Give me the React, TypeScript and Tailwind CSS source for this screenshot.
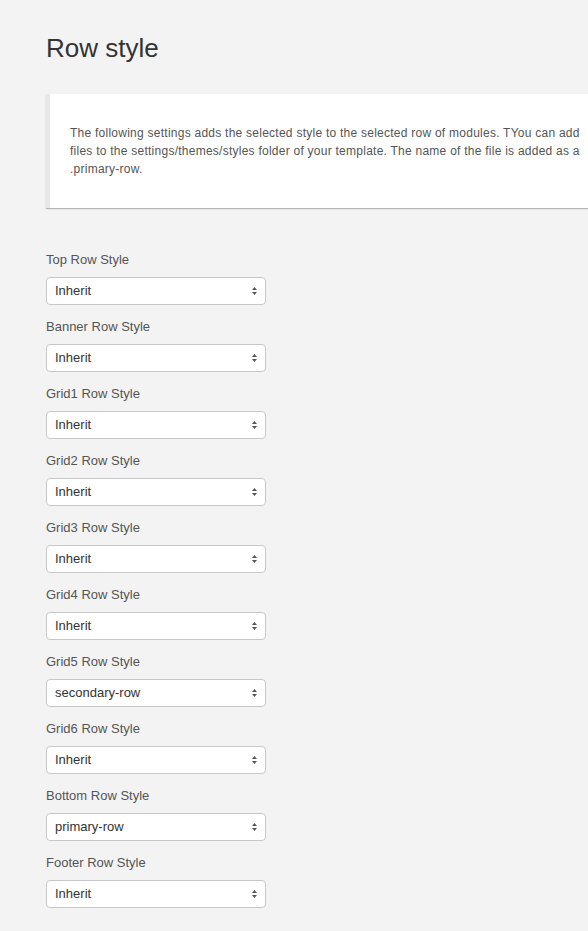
const ROWS = [
  { label: "Top Row Style", value: "Inherit" },
  { label: "Banner Row Style", value: "Inherit" },
  { label: "Grid1 Row Style", value: "Inherit" },
  { label: "Grid2 Row Style", value: "Inherit" },
  { label: "Grid3 Row Style", value: "Inherit" },
  { label: "Grid4 Row Style", value: "Inherit" },
  { label: "Grid5 Row Style", value: "secondary-row" },
  { label: "Grid6 Row Style", value: "Inherit" },
  { label: "Bottom Row Style", value: "primary-row" },
  { label: "Footer Row Style", value: "Inherit" },
];

function SelectArrows() {
  return (
    <svg width="7" height="10" viewBox="0 0 7 10" className="shrink-0">
      <path d="M3.5 1 L6 4 L1 4 Z" fill="#555" />
      <path d="M1 6 L6 6 L3.5 9 Z" fill="#555" />
    </svg>
  );
}

function FakeSelect({ value }: { value: string }) {
  return (
    <div className="w-[220px] h-[28px] bg-white border border-[#c8c8c8] rounded-[4px] flex items-center justify-between pl-[8px] pr-[7px] text-[13px] text-[#333]">
      <span>{value}</span>
      <SelectArrows />
    </div>
  );
}

export default function App() {
  return (
    <div
      className="min-h-[931px] w-[588px] overflow-hidden bg-[#f3f3f3]"
      style={{ fontFamily: '"Liberation Sans", Arial, sans-serif' }}
    >
      <div className="pl-[46px] pt-[31px] pb-[24px]">
        <h1 className="text-[26px] leading-[34px] text-[#333] font-normal">Row style</h1>

        {/* Info block */}
        <div className="mt-[29px] w-[700px] bg-white border-l-4 border-[#e6e6e6] shadow-[0_1px_1px_rgba(0,0,0,0.25)] pl-[20px] pt-[30px] pb-[30px]">
          <p className="text-[12px] leading-[18px] text-[#555] tracking-[0.25px] whitespace-nowrap">
            The following settings adds the selected style to the selected row of modules. TYou can add
            <br />
            files to the settings/themes/styles folder of your template. The name of the file is added as a
            <br />
            .primary-row.
          </p>
        </div>

        {/* Row style selects */}
        <div className="mt-[43px] flex flex-col">
          {ROWS.map((r) => (
            <div key={r.label} className="flex flex-col pb-[13px]">
              <label className="text-[13px] leading-[18px] text-[#555] mb-[8px]">{r.label}</label>
              <FakeSelect value={r.value} />
            </div>
          ))}
        </div>
      </div>
    </div>
  );
}
